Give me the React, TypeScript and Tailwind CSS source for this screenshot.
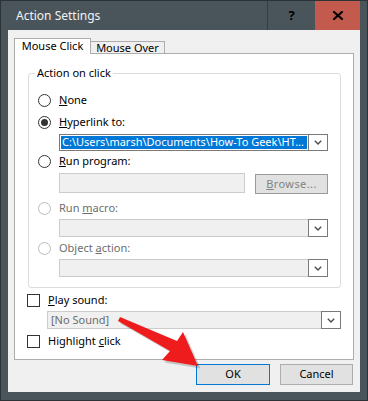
import React from "react";

function Chevron() {
  return (
    <svg width="8" height="5" viewBox="0 0 8 5">
      <path d="M0.8 0.8 L4 4 L7.2 0.8" fill="none" stroke="#4d4d4d" strokeWidth="1.4" />
    </svg>
  );
}

function Radio({ checked, disabled }: { checked?: boolean; disabled?: boolean }) {
  return (
    <span
      className={
        disabled
          ? "flex h-[13px] w-[13px] shrink-0 items-center justify-center rounded-full border border-[#bcbcbc] bg-white"
          : "flex h-[13px] w-[13px] shrink-0 items-center justify-center rounded-full border border-[#333333] bg-white"
      }
    >
      {checked && <span className="h-[7px] w-[7px] rounded-full bg-[#333333]" />}
    </span>
  );
}

function Check() {
  return <span className="h-[13px] w-[13px] shrink-0 border border-[#333333] bg-white" />;
}

function ComboButton() {
  return (
    <div className="-ml-px flex h-full w-[20px] shrink-0 items-center justify-center border border-[#7a7a7a] bg-white">
      <Chevron />
    </div>
  );
}

export default function App() {
  return (
    <div className="relative h-[401px] w-[368px] overflow-hidden border border-[#2c3235] bg-[#4a555b] font-['Noto_Sans','Open_Sans',sans-serif] text-[11px] text-black">
      {/* Title bar */}
      <div className="flex h-[29px] items-stretch">
        <div className="flex flex-1 items-center pl-[15px] text-[12px] text-[#f2f2f2]">Action Settings</div>
        <div className="flex w-[48px] items-center justify-center border-l border-[#353d41] text-[13px] font-bold text-black">
          ?
        </div>
        <div className="flex w-[45px] items-center justify-center bg-[#c35a4e]">
          <svg width="10" height="9" viewBox="0 0 10 9">
            <path d="M1 1 L9 8 M9 1 L1 8" stroke="#000" strokeWidth="2.2" strokeLinecap="square" />
          </svg>
        </div>
        <div className="w-[7px]" />
      </div>

      {/* Content */}
      <div className="ml-[7px] mr-[7px] flex h-[362px] flex-col bg-[#f0f0f0]">
        {/* Tabs */}
        <div className="ml-[6px] mt-[8px] flex items-end">
          <div className="relative z-10 -mb-px flex h-[16px] w-[77px] items-center justify-center border border-b-0 border-[#adadad] bg-white pb-[1px]">
            Mouse Click
          </div>
          <div className="flex h-[12px] w-[74px] items-center justify-center border border-b-0 border-l-0 border-[#adadad] bg-[#f0f0f0] pt-[1px]">
            Mouse Over
          </div>
        </div>

        {/* Panel */}
        <div className="ml-[6px] flex h-[307px] w-[340px] flex-col border border-[#adadad] bg-white">
          {/* Group */}
          <div className="ml-[13px] mt-[19px] flex h-[215px] w-[313px] flex-col rounded-[3px] border border-[#dcdcdc]">
            <span className="-mt-[9px] ml-[6px] h-[16px] self-start bg-white px-[2px] leading-[16px]">Action on click</span>

            <div className="ml-[9px] flex flex-col">
              <div className="mt-[12px] flex h-[14px] items-center gap-[8px]">
                <Radio />
                <span><u>N</u>one</span>
              </div>
              <div className="mt-[8px] flex h-[14px] items-center gap-[8px]">
                <Radio checked />
                <span><u>H</u>yperlink to:</span>
              </div>
              <div className="ml-[21px] mt-[5px] flex h-[17px] w-[269px]">
                <div className="flex flex-1 items-center border border-[#7a7a7a] bg-white p-px">
                  <div className="flex h-full flex-1 items-center bg-[#0078d7] pl-[1px] text-white">
                    C:\Users\marsh\Documents\How-To Geek\HT...
                  </div>
                </div>
                <ComboButton />
              </div>
              <div className="mt-[3px] flex h-[14px] items-center gap-[8px]">
                <Radio />
                <span><u>R</u>un program:</span>
              </div>
              <div className="ml-[21px] mt-[5px] flex w-[269px] items-start justify-between">
                <div className="h-[20px] w-[186px] border border-[#cccccc] bg-[#f0f0f0]" />
                <div className="mt-px flex h-[20px] w-[73px] items-center justify-center border border-[#9a9a9a] bg-[#e1e1e1] tracking-[0.4px] text-[#838383]">
                  <span><u>B</u>rowse...</span>
                </div>
              </div>
              <div className="mt-[7px] flex h-[14px] items-center gap-[8px]">
                <Radio disabled />
                <span className="text-[#6d6d6d]">Run <u>m</u>acro:</span>
              </div>
              <div className="ml-[21px] mt-[4px] flex h-[18px] w-[269px]">
                <div className="flex-1 border border-[#cccccc] bg-[#f0f0f0]" />
                <ComboButton />
              </div>
              <div className="mt-[4px] flex h-[14px] items-center gap-[8px]">
                <Radio disabled />
                <span className="text-[#6d6d6d]">Object <u>a</u>ction:</span>
              </div>
              <div className="ml-[21px] mt-[4px] flex h-[18px] w-[269px]">
                <div className="flex-1 border border-[#cccccc] bg-[#f0f0f0]" />
                <ComboButton />
              </div>
            </div>
          </div>

          {/* Sound */}
          <div className="ml-[12px] mt-[5px] flex h-[14px] items-center gap-[8px]">
            <Check />
            <span><u>P</u>lay sound:</span>
          </div>
          <div className="ml-[32px] mt-[4px] flex h-[18px] w-[294px]">
            <div className="flex flex-1 items-center border border-[#cccccc] bg-[#f0f0f0] pl-[3px] text-[#6d6d6d]">
              [No Sound]
            </div>
            <ComboButton />
          </div>
          <div className="ml-[12px] mt-[5px] flex h-[14px] items-center gap-[8px]">
            <Check />
            <span>Highlight <u>c</u>lick</span>
          </div>
        </div>

        {/* Buttons */}
        <div className="mt-[4px] flex justify-end gap-[10px] pr-[7px]">
          <div className="flex h-[21px] w-[74px] items-center justify-center border border-[#0078d7] bg-[#e1e1e1]">OK</div>
          <div className="flex h-[21px] w-[73px] items-center justify-center border border-[#adadad] bg-[#e1e1e1]">Cancel</div>
        </div>
      </div>

      {/* Red arrow annotation */}
      <svg className="pointer-events-none absolute left-[-1px] top-[-1px]" width="368" height="401" viewBox="0 0 368 401">
        <polygon
          points="121,318 178,342 184,333 199,367 163,361 171,352 119,322"
          fill="rgba(0,0,0,0.18)"
          transform="translate(1.5,1.5)"
        />
        <polygon points="120,317 177,341 183,332 198,366 162,360 170,351 118,321" fill="#ee1c1c" />
      </svg>
    </div>
  );
}
